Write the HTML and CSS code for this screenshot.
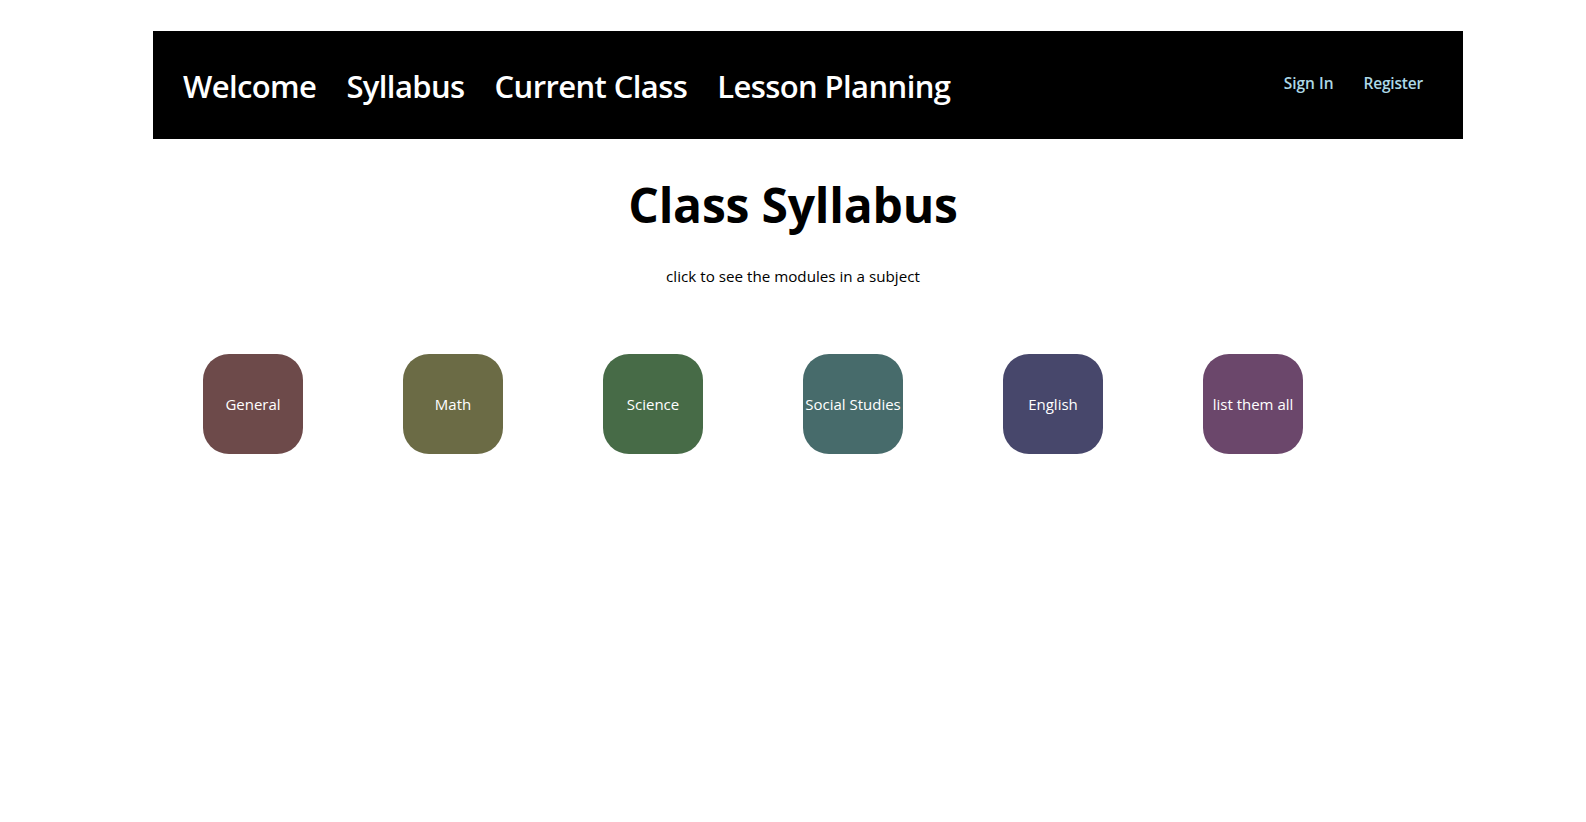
FILE: index.html
```html
<!DOCTYPE html>
<html>
<head>
<meta charset="utf-8">
<link rel="stylesheet" href="styles.css">
</head>
<body>
<header class="topbar">
  <nav class="main-nav">
    <a href="#">Welcome</a>
    <a href="#">Syllabus</a>
    <a href="#">Current Class</a>
    <a href="#">Lesson Planning</a>
  </nav>
  <nav class="auth-nav">
    <a href="#">Sign In</a>
    <a href="#">Register</a>
  </nav>
</header>
<main>
  <h1 class="title">Class Syllabus</h1>
  <p class="subtitle">click to see the modules in a subject</p>
  <div class="subjects">
    <button class="subject general">General</button>
    <button class="subject math">Math</button>
    <button class="subject science">Science</button>
    <button class="subject social">Social Studies</button>
    <button class="subject english">English</button>
    <button class="subject all">list them all</button>
  </div>
</main>
</body>
</html>
```
FILE: styles.css
```css
html, body {
  margin: 0;
  padding: 0;
  background: #fff;
  font-family: "Open Sans", "Noto Sans", sans-serif;
  color: #000;
}
.topbar {
  margin: 31px 123px 0 153px;
  height: 108px;
  background: #000;
  display: flex;
  align-items: center;
  justify-content: space-between;
  padding: 0 40px 0 30px;
  box-sizing: border-box;
}
.main-nav {
  display: flex;
  gap: 30px;
  margin-top: 2px;
}
.main-nav a {
  color: #fff;
  text-decoration: none;
  font-size: 31px;
  font-weight: 600;
  letter-spacing: -0.6px;
}
.auth-nav {
  display: flex;
  gap: 30px;
  margin-top: -4px;
}
.auth-nav a {
  color: #add8e6;
  text-decoration: none;
  font-size: 15.5px;
  font-weight: 600;
}
.auth-nav a + a {
  letter-spacing: -0.2px;
}
.title {
  text-align: center;
  font-size: 48px;
  font-weight: 700;
  margin: 34px 0 0;
  line-height: 64px;
  letter-spacing: -0.2px;
}
.subtitle {
  text-align: center;
  font-size: 15.2px;
  margin: 28px 0 0;
  line-height: 22px;
}
.subjects {
  display: flex;
  margin: 67px 0 0 153px;
}
.subject {
  width: 100px;
  height: 100px;
  margin: 0 50px;
  border: none;
  border-radius: 26px;
  color: #fff;
  font-family: "Open Sans", "Noto Sans", sans-serif;
  font-size: 15px;
  padding: 0;
  white-space: nowrap;
}
.general { background: #6d4a4a; }
.math { background: #6b6b45; }
.science { background: #476b47; }
.social { background: #476b6b; }
.english { background: #47476b; }
.all { background: #6b476b; }
```
